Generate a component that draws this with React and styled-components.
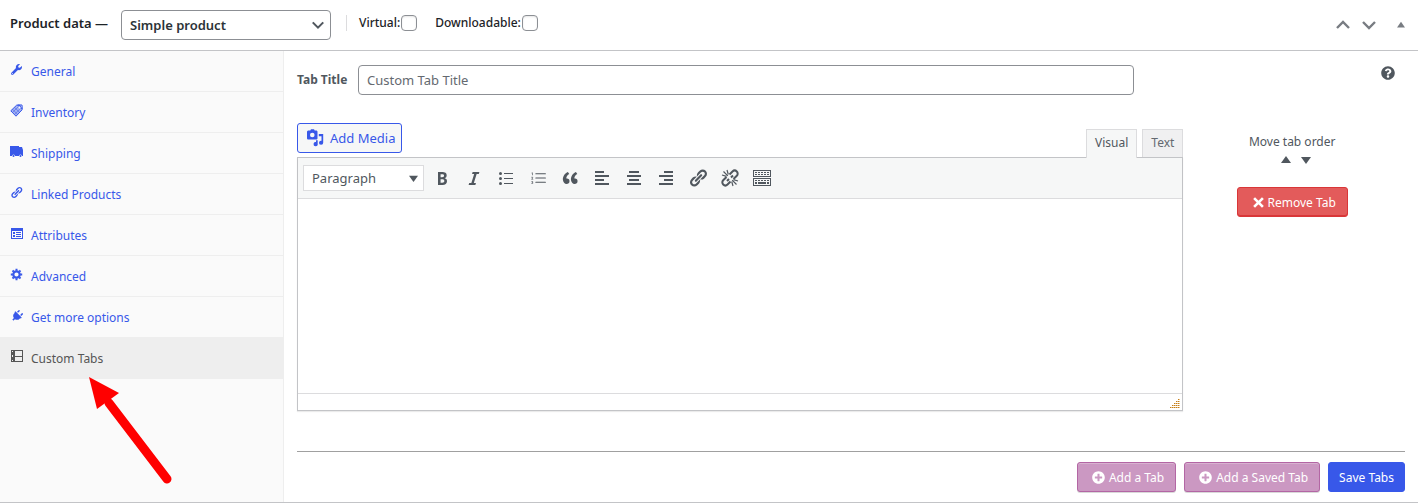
import styled, { createGlobalStyle, css } from "styled-components";
import { FaWrench, FaPlug, FaQuestionCircle, FaPlusCircle } from "react-icons/fa";
import { BsListOl } from "react-icons/bs";

const GlobalStyle = createGlobalStyle`
  * {
    box-sizing: border-box;
  }

  body {
    margin: 0;
    background: #fff;
    color: #50575e;
    font-family: "Noto Sans", "Open Sans", sans-serif;
    font-size: 13px;
    line-height: 18px;
  }

  button, input, select, textarea {
    font-family: inherit;
    font-size: inherit;
    margin: 0;
  }
`;

const LINK_PATH =
  "M17.74 2.76c1.68 1.69 1.68 4.41 0 6.1l-1.53 1.52c-1.12 1.12-2.7 1.47-4.14 1.09l2.62-2.61.76-.77.76-.76c.84-.84.84-2.2 0-3.04-.84-.85-2.2-.85-3.04 0l-.77.76-3.38 3.38c-.37-1.44-.02-3.02 1.1-4.14l1.52-1.53c1.69-1.68 4.42-1.68 6.1 0zM8.59 13.43l5.34-5.34c.42-.42.42-1.1 0-1.52-.44-.43-1.13-.39-1.53 0l-5.33 5.34c-.42.42-.42 1.1 0 1.52.44.43 1.13.39 1.52 0zm-.76 2.29l4.14-4.15c.38 1.44.03 3.02-1.09 4.14l-1.52 1.53c-1.69 1.68-4.41 1.68-6.1 0-1.68-1.68-1.68-4.42 0-6.1l1.53-1.52c1.12-1.12 2.7-1.47 4.14-1.1l-4.14 4.15c-.85.84-.85 2.2 0 3.05.84.84 2.2.84 3.04 0z";

const Svg = ({ size = 20, box = 20, children }) => (
  <svg width={size} height={size} viewBox={`0 0 ${box} ${box}`} fill="currentColor" aria-hidden="true">
    {children}
  </svg>
);

const LinkIcon = ({ size }) => (
  <Svg size={size}>
    <path d={LINK_PATH} />
  </Svg>
);

const TagIcon = () => (
  <Svg size={13} box={13}>
    <path d="M.8 6.8 6.6 1.2l3.6.3 2 4.2-6.2 6.5z" fillOpacity=".45" />
    <path d="M.8 6.8 6.6 1.2l3.6.3 2 4.2L6 12.2z" fill="none" stroke="currentColor" strokeWidth="1" />
    <path d="M7.5.8 12 1l.3 4" fill="none" stroke="currentColor" strokeWidth="1" />
    <path d="M2.5 5.2 7.5 10.4M4.5 3.3l4.8 5M2.5 8.5 8.5 2.5M4.5 10.4l6-6" stroke="currentColor" strokeWidth=".5" />
    <circle cx="9.5" cy="3.6" r=".9" fill="#fafafa" />
  </Svg>
);

const TruckIcon = () => (
  <Svg size={13} box={13}>
    <path d="M0 1h9v1h3l1 3v6h-1a1.5 1.5 0 0 0-3 0H5a1.5 1.5 0 0 0-3 0H0z" />
    <circle cx="3.5" cy="11" r="1" />
    <circle cx="10.5" cy="11" r="1" />
  </Svg>
);

const AttributesIcon = () => (
  <Svg size={13} box={13}>
    <path fillRule="evenodd" d="M1 1h12v11H1zM2 4v7h10V4zM3 5h2v2H3zM6 5h5v1H6zM3 8h2v2H3zM6 7h5v1H6zM6 9h5v1H6z" />
  </Svg>
);

const GearIcon = () => (
  <Svg size={13} box={13}>
    <circle cx="6.5" cy="6.5" r="3.2" fill="none" stroke="currentColor" strokeWidth="2.2" />
    <path
      d="M6.5.8v2M6.5 10.2v2M.8 6.5h2M10.2 6.5h2M2.5 2.5l1.3 1.3M9.2 9.2l1.3 1.3M10.5 2.5 9.2 3.8M3.8 9.2l-1.3 1.3"
      stroke="currentColor"
      strokeWidth="2"
    />
  </Svg>
);

const LayoutIcon = () => (
  <Svg size={13} box={13}>
    <path fillRule="evenodd" d="M1 0h12v12H1zM5 1v5h7V1zM5 7v4h7V7zM2 1v1h1V1zM2 5v2h1V5zM2 10v1h1v-1z" />
  </Svg>
);

const MediaIcon = () => (
  <Svg size={18} box={18}>
    <path
      fillRule="evenodd"
      d="M2.5 1.5h1.8L5 .3h3l.7 1.2h1.5c.7 0 1.3.6 1.3 1.3v6.4c0 .7-.6 1.3-1.3 1.3H2.3C1.6 10.5 1 9.9 1 9.2V2.8c0-.7.8-1.3 1.5-1.3zM6.3 3.7a2.3 2.3 0 1 0 0 4.6 2.3 2.3 0 0 0 0-4.6z"
    />
    <path d="M12.8 5h4.4v8.7a2.1 2.1 0 1 1-1.7-2V7.3h-2.7z" />
    <path d="M10 11.2h1.7v3.5a2.1 2.1 0 1 1-1.7-1.7z" />
  </Svg>
);

const UnlinkIcon = () => (
  <Svg>
    <g fill="none" stroke="currentColor">
      <path strokeWidth="2" d="M9.5 6.5l3-3a3 3 0 0 1 4.3 4.3l-3.3 3.2M10.5 13.5l-3 3a3 3 0 0 1-4.3-4.3l3.3-3.2M11 9.5l2-2M7 13l2-2" />
      <path strokeWidth="1.2" d="M7.8 7.8 3.5 3.5M8.3 6.5 7 2M6.5 8.3 2 7M12.2 12.2l4.3 4.3M11.7 13.5 13 18M13.5 11.7 18 13" />
    </g>
  </Svg>
);

const SinkIcon = () => (
  <Svg>
    <path
      fillRule="evenodd"
      d="M1 2h18v7H1zM2 3v5h16V3zM1 10h18v8H1zM2 11v6h16v-6zM3 4h2v1H3zM6 4h2v1H6zM9 4h2v1H9zM12 4h2v1h-2zM15 4h2v1h-2zM3 6h2v1H3zM6 6h2v1H6zM9 6h2v1H9zM12 6h2v1h-2zM15 6h2v1h-2zM3 12h2v1H3zM6 12h2v1H6zM9 12h2v1H9zM12 12h2v1h-2zM15 12h2v1h-2zM3 14h2v2H3zM6 14h8v2H6zM15 14h2v2h-2z"
    />
  </Svg>
);

const Chevron = ({ up, size = 16 }) => (
  <Svg size={size} box={16}>
    <path
      d={up ? "M2 11l6-6 6 6" : "M2 5l6 6 6-6"}
      fill="none"
      stroke="currentColor"
      strokeWidth="2.4"
    />
  </Svg>
);

const Triangle = ({ down, size = 10 }) => (
  <Svg size={size} box={10}>
    <path d={down ? "M0 2h10L5 9z" : "M0 8h10L5 1z"} />
  </Svg>
);

const navItems = [
  { id: 1, text: "General", icon: <FaWrench size={11} /> },
  { id: 2, text: "Inventory", icon: <TagIcon /> },
  { id: 3, text: "Shipping", icon: <TruckIcon /> },
  { id: 4, text: "Linked Products", icon: <LinkIcon size={13} /> },
  { id: 5, text: "Attributes", icon: <AttributesIcon /> },
  { id: 6, text: "Advanced", icon: <GearIcon /> },
  { id: 7, text: "Get more options", icon: <FaPlug size={12} style={{ transform: "rotate(45deg)" }} /> },
  { id: 8, text: "Custom Tabs", icon: <LayoutIcon />, active: true },
];

const tools = [
  {
    label: "Bold",
    icon: (
      <Svg>
        <path d="M6 4v13h4.54c1.37 0 2.46-.33 3.26-1 .8-.66 1.2-1.58 1.2-2.77 0-.84-.17-1.51-.51-2.01s-.9-.85-1.67-1.03v-.09c.57-.1 1.02-.4 1.36-.9s.51-1.13.51-1.91c0-1.14-.39-1.98-1.17-2.5C12.75 4.26 11.5 4 9.78 4H6zm2.57 5.15V6.26h1.36c.73 0 1.27.11 1.61.32.34.22.51.58.51 1.07 0 .54-.16.92-.47 1.15s-.82.35-1.51.35h-1.5zm0 2.19h1.6c1.44 0 2.16.53 2.16 1.61 0 .6-.17 1.05-.51 1.34s-.86.43-1.57.43H8.57v-3.38z" />
      </Svg>
    ),
  },
  {
    label: "Italic",
    icon: (
      <Svg>
        <path d="M14.78 6h-2.13l-2.8 9h2.12l-.62 2H4.6l.62-2h2.14l2.8-9H8.03l.62-2h6.75z" />
      </Svg>
    ),
  },
  {
    label: "Bulleted list",
    icon: (
      <Svg>
        <circle cx="4.5" cy="5.5" r="1.5" />
        <circle cx="4.5" cy="10.5" r="1.5" />
        <circle cx="4.5" cy="15.5" r="1.5" />
        <path d="M8 5h9v1H8zM8 10h9v1H8zM8 15h9v1H8z" />
      </Svg>
    ),
  },
  { label: "Numbered list", icon: <BsListOl size={17} /> },
  {
    label: "Blockquote",
    icon: (
      <Svg>
        <path d="M9.49 13.22c0-.74-.2-1.38-.61-1.9-.62-.78-1.83-.88-2.53-.72-.29-1.65 1.11-3.75 2.92-4.65L7.88 4c-2.73 1.3-5.42 4.28-4.96 8.05C3.21 14.43 4.59 16 6.54 16c.85 0 1.56-.25 2.12-.75s.83-1.18.83-2.03zm8.05 0c0-.74-.2-1.38-.61-1.9-.63-.78-1.83-.88-2.53-.72-.29-1.65 1.11-3.75 2.92-4.65L15.93 4c-2.73 1.3-5.41 4.28-4.95 8.05.29 2.38 1.66 3.95 3.61 3.95.85 0 1.56-.25 2.12-.75s.83-1.18.83-2.03z" />
      </Svg>
    ),
  },
  { label: "Align left", icon: <Svg><path d="M3 3h9v2H3zM3 7h14v2H3zM3 11h9v2H3zM3 15h14v2H3z" /></Svg> },
  { label: "Align center", icon: <Svg><path d="M5 3h10v2H5zM3 7h14v2H3zM5 11h10v2H5zM3 15h14v2H3z" /></Svg> },
  { label: "Align right", icon: <Svg><path d="M8 3h9v2H8zM3 7h14v2H3zM8 11h9v2H8zM3 15h14v2H3z" /></Svg> },
  { label: "Insert link", icon: <LinkIcon size={20} /> },
  { label: "Remove link", icon: <UnlinkIcon /> },
  { label: "Toolbar toggle", icon: <SinkIcon /> },
];

const App = () => {
  return (
    <Panel>
      <GlobalStyle />
      <Header>
        <Heading>
          <label htmlFor="product-type">Product data —</label>
        </Heading>
        <TypeSelect>
          <select id="product-type" defaultValue="simple">
            <option value="simple">Simple product</option>
          </select>
          <Chevron size={14} />
        </TypeSelect>
        <Options>
          <CheckLabel>
            Virtual:
            <Checkbox type="checkbox" />
          </CheckLabel>
          <CheckLabel>
            Downloadable:
            <Checkbox type="checkbox" />
          </CheckLabel>
        </Options>
        <HeaderActions>
          <IconButton aria-label="Move up"><Chevron up /></IconButton>
          <IconButton aria-label="Move down"><Chevron /></IconButton>
          <IconButton aria-label="Toggle panel" $last><Triangle size={8} /></IconButton>
        </HeaderActions>
      </Header>

      <Body>
        <Sidebar>
          {navItems.map((item) => (
            <NavLink key={item.id} href="#" $active={item.active}>
              <NavIcon>{item.icon}</NavIcon>
              <span>{item.text}</span>
            </NavLink>
          ))}
          <Arrow width="90" height="112" viewBox="0 0 90 112" aria-hidden="true">
            <path d="M24 27 82 103" stroke="#f00" strokeWidth="9" strokeLinecap="round" />
            <path d="M4 1 34 17 12 33z" fill="#f00" />
          </Arrow>
        </Sidebar>

        <Main>
          <TitleRow>
            <TitleLabel htmlFor="tab-title">Tab Title</TitleLabel>
            <TitleInput id="tab-title" type="text" placeholder="Custom Tab Title" />
            <Help><FaQuestionCircle size={14} /></Help>
          </TitleRow>

          <Columns>
            <EditorColumn>
              <EditorTop>
                <MediaButton>
                  <MediaIcon />
                  Add Media
                </MediaButton>
                <Tabs>
                  <Tab $active>Visual</Tab>
                  <Tab>Text</Tab>
                </Tabs>
              </EditorTop>
              <Editor>
                <Toolbar>
                  <FormatSelect>
                    <select aria-label="Format" defaultValue="p">
                      <option value="p">Paragraph</option>
                    </select>
                    <Triangle down size={9} />
                  </FormatSelect>
                  <Tools>
                    {tools.map((tool) => (
                      <Tool key={tool.label} aria-label={tool.label}>{tool.icon}</Tool>
                    ))}
                  </Tools>
                </Toolbar>
                <TextArea aria-label="Tab content" />
                <StatusBar>
                  <svg width="10" height="10" viewBox="0 0 10 10" aria-hidden="true">
                    <path d="M8 1.5h2M6 3.5h4M4 5.5h6M2 7.5h8M0 9.5h10" stroke="#e8c48c" />
                    <path
                      d="M8 1.5h2M6 3.5h4M4 5.5h6M2 7.5h8M0 9.5h10"
                      stroke="#c47d1a"
                      strokeDasharray="1 1"
                    />
                  </svg>
                </StatusBar>
              </Editor>
            </EditorColumn>

            <SideColumn>
              <span>Move tab order</span>
              <OrderButtons>
                <IconButton aria-label="Move tab up"><Triangle /></IconButton>
                <IconButton aria-label="Move tab down"><Triangle down /></IconButton>
              </OrderButtons>
              <Button $variant="danger">
                <Svg size={11} box={10}>
                  <path d="M1 1l8 8M9 1 1 9" stroke="currentColor" strokeWidth="2.4" />
                </Svg>
                Remove Tab
              </Button>
            </SideColumn>
          </Columns>

          <Footer>
            <Button $variant="muted"><FaPlusCircle size={13} />Add a Tab</Button>
            <Button $variant="muted"><FaPlusCircle size={13} />Add a Saved Tab</Button>
            <Button>Save Tabs</Button>
          </Footer>
        </Main>
      </Body>
    </Panel>
  );
};

const Panel = styled.div`
  border-bottom: 1px solid #c3c4c7;
`;

const Header = styled.header`
  display: flex;
  align-items: center;
  height: 51px;
  padding: 0 10px;
  border-bottom: 1px solid #c3c4c7;
  color: #1d2327;
`;

const Heading = styled.h2`
  margin: 0 13px 4px 0;
  font-size: 13px;
  font-weight: 600;
`;

const TypeSelect = styled.div`
  position: relative;
  width: 210px;

  select {
    appearance: none;
    width: 100%;
    height: 30px;
    padding: 0 24px 0 8px;
    border: 1px solid #8c8f94;
    border-radius: 4px;
    background: #fff;
    color: #2c3338;
    font-weight: 600;
  }

  svg {
    position: absolute;
    right: 6px;
    top: 8px;
    color: #50575e;
    pointer-events: none;
  }
`;

const Options = styled.div`
  display: flex;
  align-items: center;
  gap: 18px;
  height: 16px;
  margin: 0 0 4px 15px;
  padding-left: 12px;
  border-left: 1px solid #dcdcde;
`;

const CheckLabel = styled.label`
  display: flex;
  align-items: center;
  gap: 1px;
  font-size: 12px;
  font-weight: 500;
`;

const Checkbox = styled.input`
  appearance: none;
  width: 16px;
  height: 16px;
  border: 1px solid #8c8f94;
  border-radius: 4px;
  background: #fff;
  box-shadow: inset 0 1px 2px rgba(0, 0, 0, 0.1);
`;

const HeaderActions = styled.div`
  display: flex;
  align-items: center;
  gap: 10px;
  margin-left: auto;
  color: #787c82;
`;

const IconButton = styled.button`
  display: flex;
  padding: 0;
  border: 0;
  background: none;
  color: inherit;
  cursor: pointer;
  ${({ $last }) => $last && css`margin: 0 3px 0 10px;`}
`;

const Body = styled.div`
  display: flex;
`;

const Sidebar = styled.nav`
  position: relative;
  flex: 0 0 284px;
  background: #fafafa;
  border-right: 1px solid #eee;
`;

const NavLink = styled.a`
  display: flex;
  align-items: center;
  gap: 8px;
  height: 41px;
  padding: 1px 10px 0;
  border-bottom: 1px solid #eee;
  background: ${({ $active }) => ($active ? "#eee" : "transparent")};
  color: ${({ $active }) => ($active ? "#555" : "#3858e9")};
  font-size: 12px;
  text-decoration: none;
`;

const NavIcon = styled.span`
  display: flex;
  justify-content: center;
  width: 13px;
  margin-bottom: 4px;
`;

// pointer over the active tab
const Arrow = styled.svg`
  position: absolute;
  left: 85px;
  top: 325px;
  fill: none;
`;

const Main = styled.main`
  flex: 1;
  min-width: 0;
  padding: 14px 13px 10px;
`;

const TitleRow = styled.div`
  display: flex;
  align-items: center;
`;

const TitleLabel = styled.label`
  width: 61px;
  font-size: 12px;
  font-weight: 700;
`;

const TitleInput = styled.input`
  width: 70%;
  height: 30px;
  padding: 0 8px;
  border: 1px solid #8c8f94;
  border-radius: 4px;
  color: #2c3338;

  &::placeholder {
    color: #646970;
    opacity: 1;
  }
`;

const Help = styled.span`
  display: flex;
  margin: 0 10px 14px auto;
`;

const Columns = styled.div`
  display: flex;
  margin-top: 28px;
`;

const EditorColumn = styled.div`
  width: 80%;
`;

const EditorTop = styled.div`
  display: flex;
  justify-content: space-between;
  height: 34px;
`;

const MediaButton = styled.button`
  display: flex;
  align-items: center;
  gap: 6px;
  height: 30px;
  padding: 0 6px 0 8px;
  border: 1px solid #3858e9;
  border-radius: 3px;
  background: #f6f7f7;
  color: #3858e9;
`;

const Tabs = styled.div`
  display: flex;
  align-items: flex-end;
  gap: 5px;
`;

const Tab = styled.button`
  height: 28px;
  padding: 0 8px 2px;
  border: 1px solid #dcdcde;
  border-bottom: 0;
  background: #f0f0f1;
  color: #646970;
  font-size: 12px;

  ${({ $active }) =>
    $active &&
    css`
      position: relative;
      height: 29px;
      margin-bottom: -1px;
      padding-bottom: 3px;
      background: #f6f7f7;
      color: #50575e;
    `}
`;

const Editor = styled.div`
  border: 1px solid #c3c4c7;
  box-shadow: 0 1px 1px rgba(0, 0, 0, 0.08);
`;

const Toolbar = styled.div`
  display: flex;
  align-items: center;
  gap: 6px;
  height: 41px;
  padding: 0 5px;
  background: #f6f7f7;
  border-bottom: 1px solid #dcdcde;
  box-shadow: 0 1px 1px rgba(0, 0, 0, 0.06);
`;

const FormatSelect = styled.div`
  position: relative;
  width: 121px;

  select {
    appearance: none;
    width: 100%;
    height: 26px;
    padding: 0 20px 0 8px;
    border: 1px solid #dcdcde;
    background: #fff;
    color: #50575e;
  }

  svg {
    position: absolute;
    right: 6px;
    top: 9px;
    pointer-events: none;
  }
`;

const Tools = styled.div`
  display: flex;
  gap: 8px;
`;

const Tool = styled.button`
  display: flex;
  align-items: center;
  justify-content: center;
  width: 24px;
  height: 24px;
  padding: 0;
  border: 0;
  background: none;
  color: #50575e;
`;

const TextArea = styled.textarea`
  display: block;
  width: 100%;
  height: 194px;
  padding: 10px;
  border: 0;
  resize: none;
`;

const StatusBar = styled.div`
  display: flex;
  align-items: flex-end;
  justify-content: flex-end;
  height: 17px;
  padding: 2px;
  border-top: 1px solid #dcdcde;
`;

const SideColumn = styled.div`
  display: flex;
  flex: 1;
  flex-direction: column;
  align-items: center;
  padding: 10px 4px 0 0;
  font-size: 12px;
`;

const OrderButtons = styled.div`
  display: flex;
  gap: 10px;
  margin: 4px 0 22px;
  padding-left: 8px;
`;

const variants = {
  primary: css`
    padding: 0 10px;
    background: #3858e9;
    border-color: #3858e9;
  `,
  muted: css`
    padding: 0 11px 0 14px;
    background: #cb98c2;
    border-color: #b366a4;
    box-shadow: inset 0 1px 0 rgba(255, 255, 255, 0.25), 0 1px 0 rgba(0, 0, 0, 0.15);
  `,
  danger: css`
    padding: 0 11px 0 15px;
    background: #e35b5b;
    border-color: #d93638;
    box-shadow: inset 0 -1px 0 #d93638;
  `,
};

const Button = styled.button`
  display: flex;
  align-items: center;
  gap: 4px;
  height: 30px;
  border: 1px solid;
  border-radius: 3px;
  color: #fff;
  font-size: 12px;
  cursor: pointer;
  ${({ $variant = "primary" }) => variants[$variant]}
`;

const Footer = styled.footer`
  display: flex;
  justify-content: flex-end;
  gap: 8px;
  margin-top: 40px;
  padding-top: 10px;
  border-top: 1px solid #a0a0a0;
`;

export default App;
